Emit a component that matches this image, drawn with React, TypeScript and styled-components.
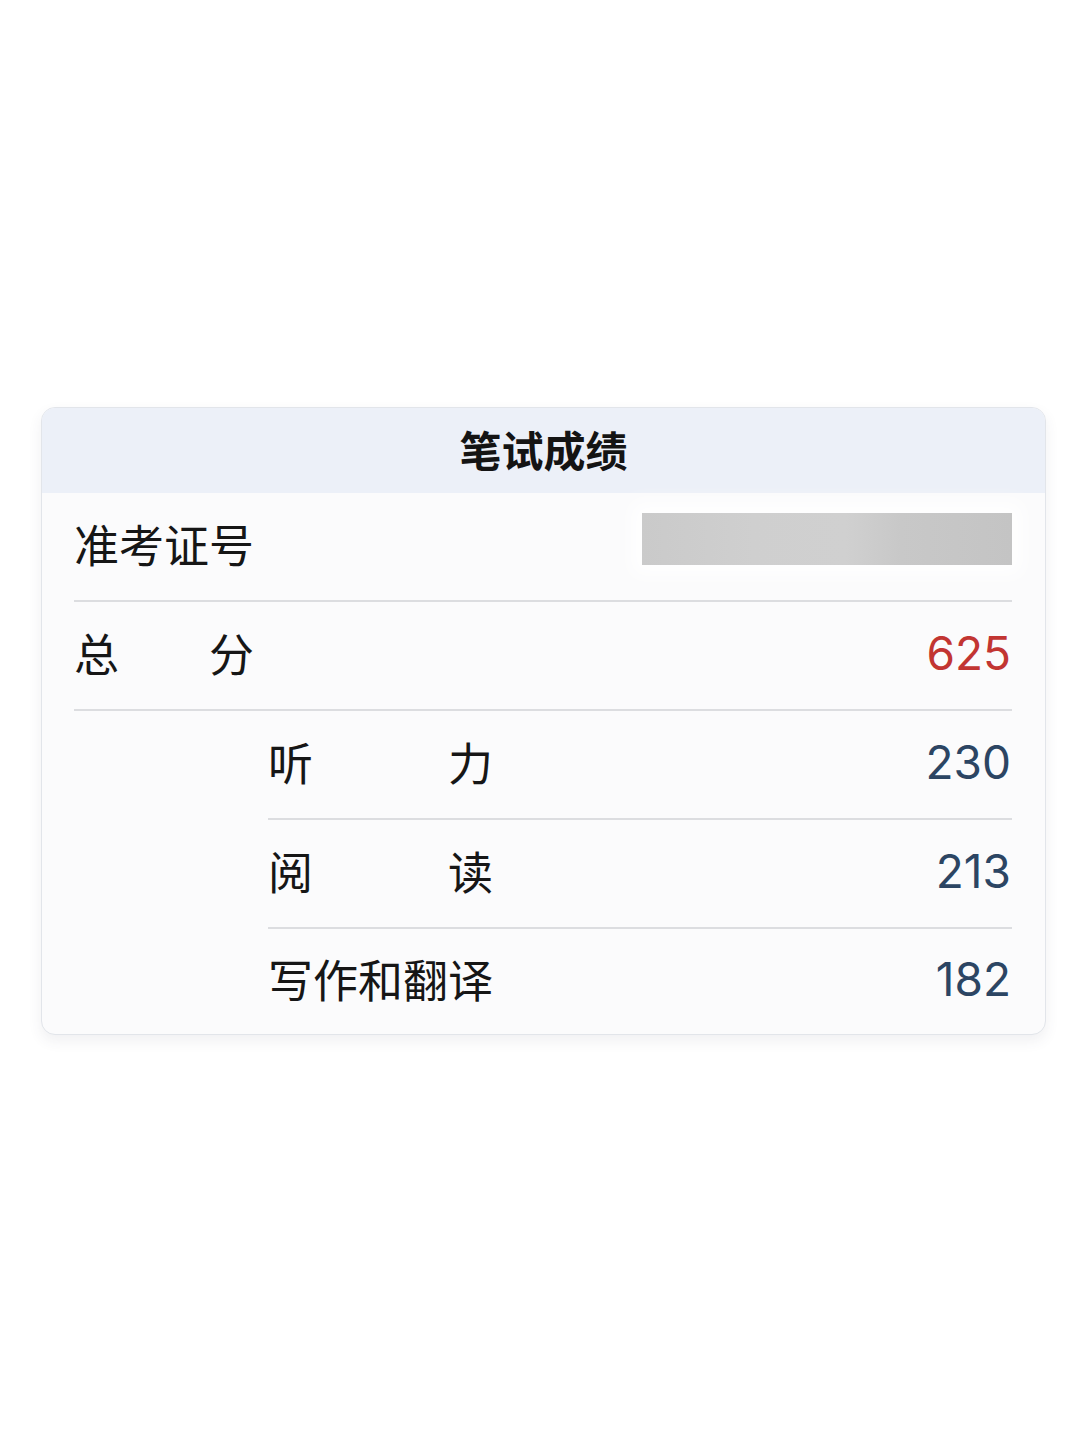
import React from 'react';
import styled, { createGlobalStyle } from 'styled-components';

const GlobalStyle = createGlobalStyle`
    html, body {
        margin: 0;
        padding: 0;
        background: #ffffff;
    }
    body {
        font-family: "Noto Sans CJK SC", "Noto Sans", sans-serif;
        color: #1b1b1b;
    }
`;

const Page = styled.div`
    width: 1080px;
    height: 1440px;
    padding-top: 407px;
    box-sizing: border-box;
`;

const Card = styled.section`
    margin-left: 41px;
    width: 1005px;
    border-radius: 14px;
    background: #fbfbfc;
    border: 1px solid #e2e5ea;
    box-sizing: border-box;
    box-shadow: 0 6px 14px rgba(60, 70, 90, 0.08);
    overflow: hidden;
`;

const Header = styled.header`
    height: 85px;
    display: flex;
    align-items: center;
    justify-content: center;
    background: #ecf0f8;
`;

const Title = styled.h1`
    margin: 0 0 4px;
    font-size: 42px;
    font-weight: 700;
    line-height: 1;
    color: #141414;
`;

const Body = styled.div`
    padding: 0 33px 0 32px;
`;

const Row = styled.div<{ $indent?: boolean; $last?: boolean }>`
    height: ${p => (p.$last ? 105 : 109)}px;
    margin-left: ${p => (p.$indent ? 194 : 0)}px;
    padding-bottom: 6px;
    display: flex;
    align-items: center;
    justify-content: space-between;
    border-bottom: ${p => (p.$last ? 'none' : '2px solid #dcdde0')};
    box-sizing: border-box;
`;

const Label = styled.div<{ $span?: number }>`
    font-size: 45px;
    line-height: 1;
    display: flex;
    justify-content: space-between;
    width: ${p => (p.$span ? `${p.$span * 45}px` : 'auto')};
    color: #161616;
`;

const Score = styled.div<{ $total?: boolean }>`
    font-family: "Inter", "Liberation Sans", sans-serif;
    font-size: 46px;
    line-height: 1;
    margin-right: 1px;
    color: ${p => (p.$total ? '#c23532' : '#2c4563')};
`;

const Redacted = styled.div`
    width: 370px;
    height: 52px;
    margin-bottom: 10px;
    background: linear-gradient(
        90deg,
        #cacaca 0%,
        #cfcfcf 30%,
        #d0d0d0 55%,
        #c8c8c8 70%,
        #c4c4c4 100%
    );
    box-shadow: 0 0 18px 10px rgba(255, 255, 255, 0.9);
`;

const SpreadLabel = ({ text, span }: { text: string; span: number }) => (
    <Label $span={span}>
        {text.split('').map((ch, i) => (
            <span key={i}>{ch}</span>
        ))}
    </Label>
);

const scores = [
    { name: '听力', value: '230' },
    { name: '阅读', value: '213' },
];

export default function App() {
    return (
        <Page>
            <GlobalStyle />
            <Card>
                <Header>
                    <Title>笔试成绩</Title>
                </Header>
                <Body>
                    <Row>
                        <Label>准考证号</Label>
                        <Redacted />
                    </Row>
                    <Row>
                        <SpreadLabel text="总分" span={4} />
                        <Score $total>625</Score>
                    </Row>
                    {scores.map(s => (
                        <Row key={s.name} $indent>
                            <SpreadLabel text={s.name} span={5} />
                            <Score>{s.value}</Score>
                        </Row>
                    ))}
                    <Row $indent $last>
                        <Label>写作和翻译</Label>
                        <Score>182</Score>
                    </Row>
                </Body>
            </Card>
        </Page>
    );
}
